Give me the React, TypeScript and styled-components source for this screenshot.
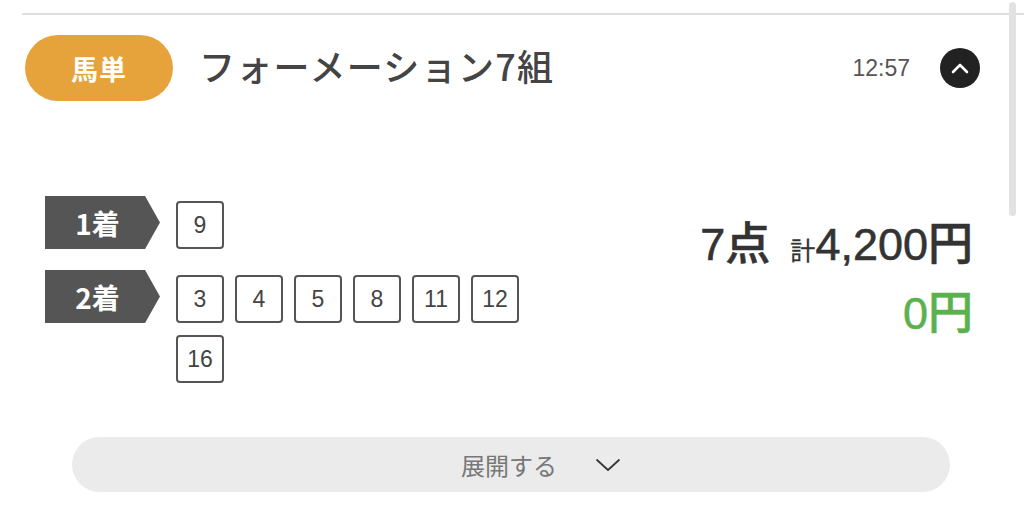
import { FC } from 'react';
import styled, { createGlobalStyle } from 'styled-components';

const GlobalStyle = createGlobalStyle`
  html, body {
    margin: 0;
    padding: 0;
    background: #fff;
    font-family: "Noto Sans CJK JP", "Noto Sans", sans-serif;
    color: #333;
  }
  body {
    overflow: hidden;
  }
`;

const latin = `"Liberation Sans", "Noto Sans CJK JP", sans-serif`;

const Page = styled.div`
  position: relative;
  width: 1024px;
  height: 522px;
  overflow: hidden;
  padding-top: 13px;
  box-sizing: border-box;
`;

const Scrollbar = styled.div`
  position: absolute;
  top: 2px;
  right: 8px;
  width: 7px;
  height: 214px;
  border-radius: 4px;
  background: #e2e2e2;
`;

const Card = styled.section`
  margin-left: 22px;
  border-top: 2px solid #dedede;
  padding: 20px 44px 0 3px;
`;

const Header = styled.header`
  display: flex;
  align-items: center;
`;

const Badge = styled.div`
  width: 148px;
  height: 66px;
  border-radius: 33px;
  background: #e6a33b;
  color: #fff;
  font-size: 27px;
  font-weight: 700;
  display: flex;
  align-items: center;
  justify-content: center;
  letter-spacing: 1px;
`;

const Title = styled.h2`
  margin: 0 0 6px 26px;
  font-size: 36px;
  font-weight: 500;
  color: #444;
  letter-spacing: 1.3px;
  flex: 1;
`;

const Time = styled.span`
  font-family: ${latin};
  font-size: 23px;
  color: #555;
  margin-right: 30px;
`;

const RoundButton = styled.button`
  width: 40px;
  height: 40px;
  border-radius: 50%;
  border: none;
  background: #222;
  padding: 0;
  display: flex;
  align-items: center;
  justify-content: center;
`;

const Body = styled.div`
  display: flex;
  justify-content: space-between;
  margin-top: 95px;
  padding-right: 7px;
`;

const Rows = styled.div`
  display: flex;
  flex-direction: column;
  gap: 21px;
  padding-left: 20px;
`;

const Row = styled.div`
  display: flex;
  align-items: flex-start;
`;

const PlaceLabel = styled.div`
  width: 115px;
  height: 53px;
  flex-shrink: 0;
  background: #555;
  color: #fff;
  font-size: 28px;
  font-weight: 700;
  display: flex;
  align-items: center;
  justify-content: center;
  padding-right: 10px;
  box-sizing: border-box;
  clip-path: polygon(0 0, 87% 0, 100% 50%, 87% 100%, 0 100%);
`;

const Numbers = styled.div`
  display: flex;
  flex-wrap: wrap;
  gap: 12px 11px;
  margin-left: 16px;
  padding-top: 5px;
  width: 350px;
`;

const NumBox = styled.div`
  width: 48px;
  height: 48px;
  box-sizing: border-box;
  border: 2px solid #555;
  border-radius: 4px;
  display: flex;
  align-items: center;
  justify-content: center;
  font-family: ${latin};
  font-size: 23px;
  color: #444;
`;

const Summary = styled.div`
  display: flex;
  flex-direction: column;
  align-items: flex-end;
  gap: 24px;
  margin-top: 26px;
`;

const TotalLine = styled.div`
  display: flex;
  align-items: baseline;
  line-height: 1;
  color: #333;
`;

const Big = styled.span<{ $green?: boolean }>`
  font-family: ${latin};
  font-size: 45px;
  line-height: 1;
  font-weight: 500;
  -webkit-text-stroke: 0.6px currentColor;
  color: ${(p) => (p.$green ? '#5cb14f' : '#333')};
`;

const Small = styled.span`
  font-size: 25px;
  margin-left: 20px;
  -webkit-text-stroke: 0.3px currentColor;
`;

const ExpandButton = styled.button`
  display: flex;
  align-items: center;
  justify-content: center;
  gap: 38px;
  width: 878px;
  height: 55px;
  margin: 54px 0 0 47px;
  border: none;
  border-radius: 28px;
  background: #ebebeb;
  font-family: inherit;
  font-size: 24px;
  color: #777;
  padding: 0 0 0 60px;
`;

const places = [
  { label: '1着', nums: [9] },
  { label: '2着', nums: [3, 4, 5, 8, 11, 12, 16] },
];

const App: FC = () => {
  return (
    <>
      <GlobalStyle />
      <Page>
        <Card>
          <Header>
            <Badge>馬単</Badge>
            <Title>フォーメーション7組</Title>
            <Time>12:57</Time>
            <RoundButton aria-label="閉じる">
              <svg width="18" height="12" viewBox="0 0 18 12" fill="none">
                <path d="M2 10 L9 3 L16 10" stroke="#fff" strokeWidth="2.6" strokeLinecap="round" strokeLinejoin="round" />
              </svg>
            </RoundButton>
          </Header>
          <Body>
            <Rows>
              {places.map((p) => (
                <Row key={p.label}>
                  <PlaceLabel>{p.label}</PlaceLabel>
                  <Numbers>
                    {p.nums.map((n) => (
                      <NumBox key={n}>{n}</NumBox>
                    ))}
                  </Numbers>
                </Row>
              ))}
            </Rows>
            <Summary>
              <TotalLine>
                <Big>7点</Big>
                <Small>計</Small>
                <Big>4,200円</Big>
              </TotalLine>
              <Big $green>0円</Big>
            </Summary>
          </Body>
          <ExpandButton>
            展開する
            <svg width="26" height="14" viewBox="0 0 26 14" fill="none">
              <path d="M2 2 L13 12 L24 2" stroke="#333" strokeWidth="1.7" strokeLinecap="round" strokeLinejoin="round" />
            </svg>
          </ExpandButton>
        </Card>
        <Scrollbar />
      </Page>
    </>
  );
};

export default App;
